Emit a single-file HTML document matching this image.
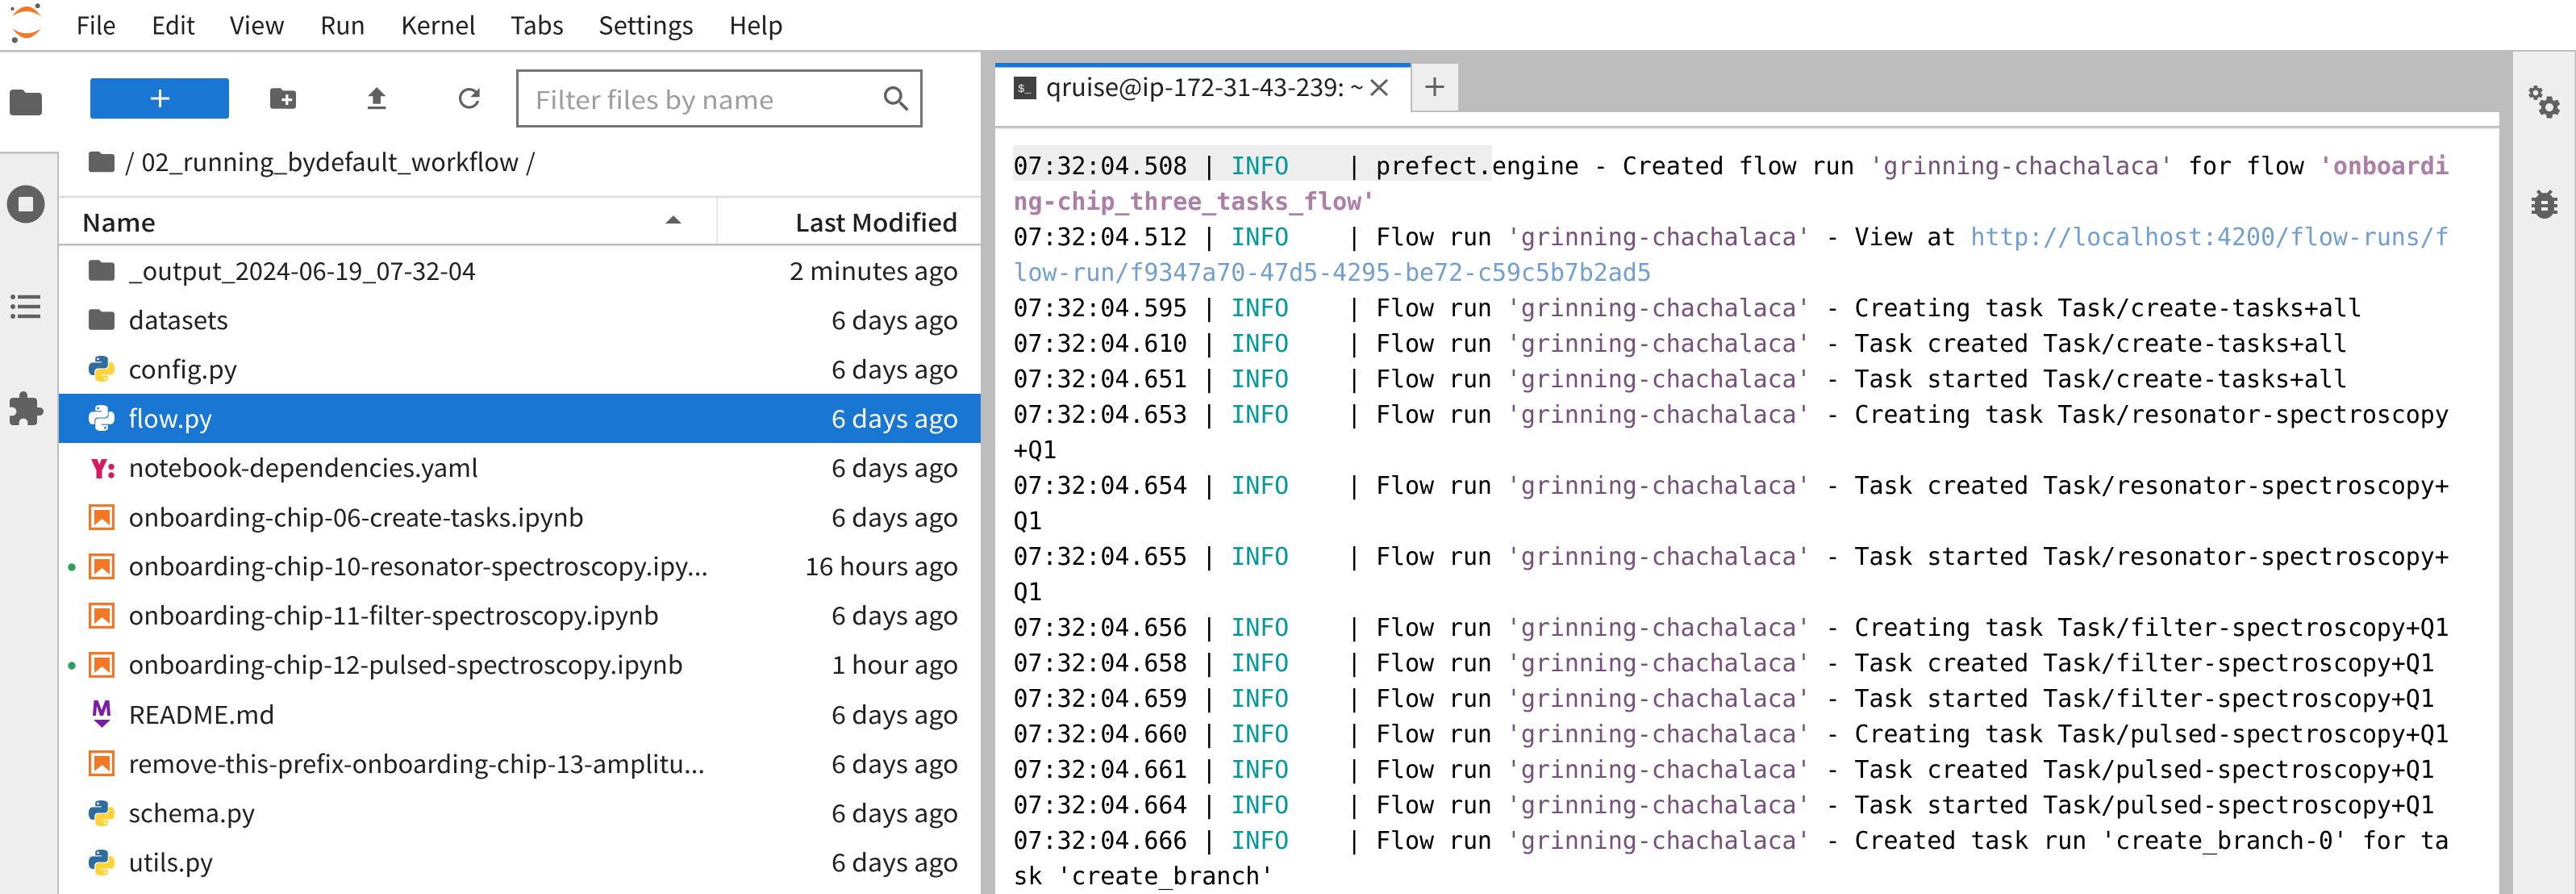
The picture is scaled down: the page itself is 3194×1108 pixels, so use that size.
<!DOCTYPE html>
<html lang="en">
<head>
<meta charset="utf-8">
<title>JupyterLab</title>
<style>
html,body{margin:0;padding:0;background:#fff;width:3194px;height:1108px;overflow:hidden}
svg{display:block}
.ui{font-family:"Noto Sans CJK JP","Liberation Sans",sans-serif;font-size:30px;fill:#212121}
.term{font-family:"DejaVu Sans Mono","Liberation Mono",monospace;font-size:30px;letter-spacing:-0.08px;fill:#000;white-space:pre}
.c{fill:#06989a}.m{fill:#75507b}.bm{fill:#ad7fa8;font-weight:bold}.l{fill:#729fcf}
.ic{fill:#616161}
</style>
</head>
<body>
<svg xmlns="http://www.w3.org/2000/svg" width="3194" height="1108" viewBox="0 0 3194 1108">
<defs>
<path id="folder" d="M10 4H4c-1.1 0-1.99.9-1.99 2L2 18c0 1.1.9 2 2 2h16c1.1 0 2-.9 2-2V8c0-1.1-.9-2-2-2h-8l-2-2z"/>
<path id="gear" d="M19.14 12.94c.04-.3.06-.61.06-.94 0-.32-.02-.64-.07-.94l2.03-1.58c.18-.14.23-.41.12-.61l-1.92-3.32c-.12-.22-.37-.29-.59-.22l-2.39.96c-.5-.38-1.03-.7-1.62-.94l-.36-2.54c-.04-.24-.24-.41-.48-.41h-3.84c-.24 0-.43.17-.47.41l-.36 2.54c-.59.24-1.13.57-1.62.94l-2.39-.96c-.22-.08-.47 0-.59.22L2.74 8.87c-.12.21-.08.47.12.61l2.03 1.58c-.05.3-.09.63-.09.94s.02.64.07.94l-2.03 1.58c-.18.14-.23.41-.12.61l1.92 3.32c.12.22.37.29.59.22l2.39-.96c.5.38 1.03.7 1.62.94l.36 2.54c.05.24.24.41.48.41h3.84c.24 0 .44-.17.47-.41l.36-2.54c.59-.24 1.13-.56 1.62-.94l2.39.96c.22.08.47 0 .59-.22l1.92-3.32c.12-.22.07-.47-.12-.61l-2.01-1.58zM12 15.6c-1.98 0-3.6-1.62-3.6-3.6s1.62-3.6 3.6-3.6 3.6 1.62 3.6 3.6-1.62 3.6-3.6 3.6z"/>
<path id="pyA" fill-rule="evenodd" d="M14.25.18l.9.2.73.26.59.3.45.32.34.34.25.34.16.33.1.3.04.26.02.2-.01.13V8.5l-.05.63-.13.55-.21.46-.26.38-.3.31-.33.25-.35.19-.35.14-.33.1-.3.07-.26.04-.21.02H8.77l-.69.05-.59.14-.5.22-.41.27-.33.32-.27.35-.2.36-.15.37-.1.35-.07.32-.04.27-.02.21v3.06H3.17l-.21-.03-.28-.07-.32-.12-.35-.18-.36-.26-.36-.36-.35-.46-.32-.59-.28-.73-.21-.88-.14-1.05-.05-1.23.06-1.22.16-1.04.24-.87.32-.71.36-.57.4-.44.42-.33.42-.24.4-.16.36-.1.32-.05.24-.01h.16l.06.01h8.16v-.83H6.18l-.01-2.75-.02-.37.05-.34.11-.31.17-.28.25-.26.31-.23.38-.2.44-.18.51-.15.58-.12.64-.1.71-.06.77-.04.84-.02 1.27.05zm-6.3 1.98l-.23.33-.08.41.08.41.23.34.33.22.41.09.41-.09.33-.22.23-.34.08-.41-.08-.41-.23-.33-.33-.22-.41-.09-.41.09z"/>
<path id="pyB" fill-rule="evenodd" d="M21.04 6.11l.28.06.32.12.35.18.36.27.36.35.35.47.32.59.28.73.21.88.14 1.04.05 1.23-.06 1.23-.16 1.04-.24.86-.32.71-.36.57-.4.45-.42.33-.42.24-.4.16-.36.09-.32.05-.24.02-.16-.01h-8.22v.82h5.84l.01 2.76.02.36-.05.34-.11.31-.17.29-.25.25-.31.24-.38.2-.44.17-.51.15-.58.13-.64.09-.71.07-.77.04-.84.01-1.27-.04-1.07-.14-.9-.2-.73-.25-.59-.3-.45-.33-.34-.34-.25-.34-.16-.33-.1-.3-.04-.25-.02-.2.01-.13v-5.34l.05-.64.13-.54.21-.46.26-.38.3-.32.33-.24.35-.2.35-.14.33-.1.3-.06.26-.04.21-.02.13-.01h5.84l.69-.05.59-.14.5-.21.41-.28.33-.32.27-.35.2-.36.15-.36.1-.35.07-.32.04-.28.02-.21V6.07h2.09l.14.01zm-6.47 14.25l-.23.33-.08.41.08.41.23.33.33.23.41.08.41-.08.33-.23.23-.33.08-.41-.08-.41-.23-.33-.33-.23-.41-.08-.41.08z"/>
<g id="py" transform="scale(1.333)"><use href="#pyA" fill="#306d9f"/><use href="#pyB" fill="#ffd43b"/></g>
<g id="nb">
<rect x="1.6" y="1.6" width="28.8" height="28.8" fill="#fff" stroke="#f37726" stroke-width="3.2"/>
<path d="M7 7H26V26L16.5 18 7 26Z" fill="#f37726"/>
</g>
</defs>

<!-- backgrounds -->
<rect width="3194" height="1108" fill="#fff"/>
<rect x="0" y="62" width="3194" height="2.5" fill="#bdbdbd"/>
<rect x="0" y="189" width="71" height="919" fill="#eee"/>
<rect x="0" y="188" width="72" height="2.5" fill="#bdbdbd"/>
<rect x="71" y="188" width="2" height="920" fill="#bdbdbd"/>
<rect x="1216" y="62" width="1900" height="1046" fill="#bdbdbd"/>
<rect x="3116" y="64" width="78" height="1044" fill="#eee"/>
<rect x="3192.5" y="64" width="1.5" height="1044" fill="#bdbdbd"/>

<!-- top menu -->
<path d="M15 20.5C21 12 27 8 33 8S45 12 51 20.5C44 15.5 38 14 33 14S22 15.5 15 20.5Z" fill="#f37726"/>
<path d="M15 35C22 40 28 41.3 33 41.3S44 40 51 35C45 43 39 47.3 33 47.3S21 43 15 35Z" fill="#f37726"/>
<circle cx="15.4" cy="11" r="2.2" fill="#616262"/>
<circle cx="46.7" cy="7.2" r="3" fill="#616262"/>
<circle cx="18.3" cy="49.7" r="3.6" fill="#616262"/>
<g class="ui">
<text x="94.5" y="42.5" textLength="49" lengthAdjust="spacingAndGlyphs">File</text>
<text x="188" y="42.5" textLength="54" lengthAdjust="spacingAndGlyphs">Edit</text>
<text x="285" y="42.5" textLength="68" lengthAdjust="spacingAndGlyphs">View</text>
<text x="397" y="42.5" textLength="56" lengthAdjust="spacingAndGlyphs">Run</text>
<text x="497" y="42.5" textLength="93" lengthAdjust="spacingAndGlyphs">Kernel</text>
<text x="633" y="42.5" textLength="66" lengthAdjust="spacingAndGlyphs">Tabs</text>
<text x="742" y="42.5" textLength="118" lengthAdjust="spacingAndGlyphs">Settings</text>
<text x="904" y="42.5" textLength="67" lengthAdjust="spacingAndGlyphs">Help</text>
</g>

<!-- left sidebar icons -->
<use href="#folder" class="ic" transform="translate(8 103) scale(2)"/>
<circle cx="32" cy="253" r="23.5" fill="#616161"/>
<rect x="23" y="244" width="18" height="18" rx="1.5" fill="#eee"/>
<g fill="#616161">
<circle cx="16" cy="368" r="3"/><circle cx="16" cy="380" r="3"/><circle cx="16" cy="392" r="3"/>
<rect x="22" y="365.8" width="28" height="4.4"/><rect x="22" y="377.8" width="28" height="4.4"/><rect x="22" y="389.8" width="28" height="4.4"/>
</g>
<path class="ic" transform="translate(8 483) scale(2)" d="M20.5 11H19V7c0-1.1-.9-2-2-2h-4V3.5C13 2.12 11.88 1 10.5 1S8 2.12 8 3.5V5H4c-1.1 0-1.99.9-1.99 2v3.8H3.5c1.49 0 2.7 1.21 2.7 2.7s-1.21 2.7-2.7 2.7H2V20c0 1.1.9 2 2 2h3.8v-1.5c0-1.49 1.21-2.7 2.7-2.7 1.49 0 2.7 1.21 2.7 2.7V22H17c1.1 0 2-.9 2-2v-4h1.5c1.38 0 2.5-1.12 2.5-2.5S21.88 11 20.5 11z"/>

<!-- toolbar -->
<rect x="112" y="97" width="172" height="50" rx="3" fill="#1976d2"/>
<path d="M198.5 111V133M187 122H210" stroke="#fff" stroke-width="3" fill="none"/>
<path class="ic" transform="translate(331.8 102.8) scale(1.6)" d="M20 6h-8l-2-2H4c-1.11 0-1.99.89-1.99 2L2 18c0 1.11.89 2 2 2h16c1.11 0 2-.89 2-2V8c0-1.11-.89-2-2-2zm-1 8h-3v3h-2v-3h-3v-2h3V9h2v3h3v2z"/>
<path class="ic" transform="translate(448 103.2) scale(1.6)" d="M9 16h6v-6h4l-7-7-7 7h4v6zm-4 2h14v2H5v-2z"/>
<path class="ic" transform="translate(562.6 102.6) scale(1.6)" d="M17.65 6.35C16.2 4.9 14.21 4 12 4c-4.42 0-7.99 3.58-7.99 8s3.57 8 7.99 8c3.73 0 6.84-2.55 7.73-6h-2.08c-.82 2.33-3.04 4-5.65 4-3.31 0-6-2.69-6-6s2.69-6 6-6c1.66 0 3.14.69 4.22 1.78L13 11h7V4l-2.35 2.35z"/>
<rect x="641.5" y="87.5" width="501" height="69" fill="#fff" stroke="#757575" stroke-width="3"/>
<text class="ui" style="fill:#9e9e9e" x="663.5" y="135" textLength="296" lengthAdjust="spacingAndGlyphs">Filter files by name</text>
<path class="ic" transform="translate(1090.7 101.75) scale(1.75)" d="M15.5 14h-.79l-.28-.27C15.41 12.59 16 11.11 16 9.5 16 5.91 13.09 3 9.5 3S3 5.91 3 9.5 5.91 16 9.5 16c1.61 0 3.09-.59 4.23-1.57l.27.28v.79l5 4.99L20.49 19l-4.99-5zm-6 0C7.01 14 5 11.99 5 9.5S7.01 5 9.5 5 14 7.01 14 9.5 11.99 14 9.5 14z"/>

<!-- breadcrumbs -->
<use href="#folder" class="ic" transform="translate(106.8 181.3) scale(1.6)"/>
<text class="ui" x="155" y="212">/</text>
<text class="ui" x="175.5" y="212" textLength="468" lengthAdjust="spacingAndGlyphs">02_running_bydefault_workflow</text>
<text class="ui" x="652" y="212">/</text>

<!-- listing header -->
<rect x="73" y="242.5" width="1143" height="3" fill="#e0e0e0"/>
<rect x="888.5" y="245" width="1.5" height="58" fill="#e0e0e0"/>
<rect x="73" y="302" width="1143" height="2.5" fill="#bdbdbd"/>
<text class="ui" x="101.5" y="287" textLength="91.5" lengthAdjust="spacingAndGlyphs" style="font-weight:500">Name</text>
<path d="M825 277H845L835 267Z" fill="#616161"/>
<text class="ui" x="986" y="287" textLength="202" lengthAdjust="spacingAndGlyphs" style="font-weight:500">Last Modified</text>

<!-- rows -->
<rect x="73" y="488" width="1143" height="61" fill="#1976d2"/>
<use href="#folder" class="ic" transform="translate(106.8 315.8) scale(1.6)"/>
<use href="#folder" class="ic" transform="translate(106.8 376.8) scale(1.6)"/>
<use href="#py" transform="translate(110 441)"/>
<g transform="translate(110 502) scale(1.333)" fill="#fff"><use href="#pyA"/><use href="#pyB"/></g>
<path d="M113 569H120.5L123.2 576 125.8 569H133L126.5 583V593H119.5V583Z" fill="#d81b60"/>
<circle cx="138" cy="578.5" r="3.7" fill="#d81b60"/><circle cx="138" cy="589" r="3.7" fill="#d81b60"/>
<use href="#nb" transform="translate(110 625)"/>
<use href="#nb" transform="translate(110 686)"/>
<use href="#nb" transform="translate(110 747)"/>
<use href="#nb" transform="translate(110 808)"/>
<path d="M115 887L116.5 868H121.5L126 880 130.5 868H135.5L137 887H133L132 875 128 887H124L120 875 119 887Z" fill="#7b1fa2"/>
<path d="M116 892H137L126.5 902Z" fill="#7b1fa2"/>
<use href="#nb" transform="translate(110 930)"/>
<use href="#py" transform="translate(110 992)"/>
<use href="#py" transform="translate(110 1053)"/>
<circle cx="89" cy="703" r="4.7" fill="#2e9e5b"/>
<circle cx="89" cy="825" r="4.7" fill="#2e9e5b"/>

<g class="ui">
<text x="159.5" y="347" textLength="430.5" lengthAdjust="spacingAndGlyphs">_output_2024-06-19_07-32-04</text>
<text x="159.5" y="408" textLength="123.5" lengthAdjust="spacingAndGlyphs">datasets</text>
<text x="159.5" y="469" textLength="134.5" lengthAdjust="spacingAndGlyphs">config.py</text>
<text x="159.5" y="530" textLength="103.5" lengthAdjust="spacingAndGlyphs" style="fill:#fff">flow.py</text>
<text x="159.5" y="591" textLength="433.5" lengthAdjust="spacingAndGlyphs">notebook-dependencies.yaml</text>
<text x="159.5" y="652.5" textLength="564.5" lengthAdjust="spacingAndGlyphs">onboarding-chip-06-create-tasks.ipynb</text>
<text x="159.5" y="713" textLength="718.5" lengthAdjust="spacingAndGlyphs">onboarding-chip-10-resonator-spectroscopy.ipy...</text>
<text x="159.5" y="774" textLength="657.5" lengthAdjust="spacingAndGlyphs">onboarding-chip-11-filter-spectroscopy.ipynb</text>
<text x="159.5" y="835" textLength="687.5" lengthAdjust="spacingAndGlyphs">onboarding-chip-12-pulsed-spectroscopy.ipynb</text>
<text x="159.5" y="897" textLength="181.5" lengthAdjust="spacingAndGlyphs">README.md</text>
<text x="159.5" y="958" textLength="714.5" lengthAdjust="spacingAndGlyphs">remove-this-prefix-onboarding-chip-13-amplitu...</text>
<text x="159.5" y="1019" textLength="156.5" lengthAdjust="spacingAndGlyphs">schema.py</text>
<text x="159.5" y="1080" textLength="104.5" lengthAdjust="spacingAndGlyphs">utils.py</text>

<text x="979" y="347" textLength="209.5" lengthAdjust="spacingAndGlyphs">2 minutes ago</text>
<text x="1031" y="408" textLength="157.5" lengthAdjust="spacingAndGlyphs">6 days ago</text>
<text x="1031" y="469" textLength="157.5" lengthAdjust="spacingAndGlyphs">6 days ago</text>
<text x="1031" y="530" textLength="157.5" lengthAdjust="spacingAndGlyphs" style="fill:#fff">6 days ago</text>
<text x="1031" y="591" textLength="157.5" lengthAdjust="spacingAndGlyphs">6 days ago</text>
<text x="1031" y="652.5" textLength="157.5" lengthAdjust="spacingAndGlyphs">6 days ago</text>
<text x="998" y="713" textLength="190.5" lengthAdjust="spacingAndGlyphs">16 hours ago</text>
<text x="1031" y="774" textLength="157.5" lengthAdjust="spacingAndGlyphs">6 days ago</text>
<text x="1031" y="835" textLength="157.5" lengthAdjust="spacingAndGlyphs">1 hour ago</text>
<text x="1031" y="897" textLength="157.5" lengthAdjust="spacingAndGlyphs">6 days ago</text>
<text x="1031" y="958" textLength="157.5" lengthAdjust="spacingAndGlyphs">6 days ago</text>
<text x="1031" y="1019" textLength="157.5" lengthAdjust="spacingAndGlyphs">6 days ago</text>
<text x="1031" y="1080" textLength="157.5" lengthAdjust="spacingAndGlyphs">6 days ago</text>
</g>

<!-- tab bar -->
<rect x="1234" y="139" width="1865" height="969" fill="#fff"/>
<rect x="1234" y="78" width="515" height="61" fill="#fff"/>
<rect x="1234" y="78" width="515" height="5.5" fill="#1976d2"/>
<rect x="1751" y="79" width="57" height="58" fill="#eee"/>
<path d="M1779 96V119M1767.5 107.5H1790.5" stroke="#616161" stroke-width="3" fill="none"/>
<rect x="1257" y="95" width="28" height="28" fill="#424242"/>
<text x="1262" y="114" style="font-family:'Liberation Mono',monospace;font-size:14px;fill:#eee">$_</text>
<text class="ui" x="1297" y="119" textLength="394" lengthAdjust="spacingAndGlyphs">qruise@ip-172-31-43-239: ~</text>
<path d="M1700 99L1720 118M1720 99L1700 118" stroke="#616161" stroke-width="3" fill="none"/>
<rect x="1234" y="156" width="1865" height="2.5" fill="#bdbdbd"/>
<rect x="1234" y="158.5" width="1865" height="1.5" fill="#e8e8e8"/>

<!-- terminal -->
<rect x="1256" y="180" width="594" height="44" fill="#eee"/>
<g class="term" xml:space="preserve">
<text x="1256.5" y="216" xml:space="preserve">07:32:04.508 | <tspan class="c">INFO</tspan>    | prefect.engine - Created flow run <tspan class="m">'grinning-chachalaca'</tspan> for flow <tspan class="bm">'onboardi</tspan></text>
<text x="1256.5" y="260" xml:space="preserve"><tspan class="bm">ng-chip_three_tasks_flow'</tspan></text>
<text x="1256.5" y="304" xml:space="preserve">07:32:04.512 | <tspan class="c">INFO</tspan>    | Flow run <tspan class="m">'grinning-chachalaca'</tspan> - View at <tspan class="l">http://localhost:4200/flow-runs/f</tspan></text>
<text x="1256.5" y="348" xml:space="preserve"><tspan class="l">low-run/f9347a70-47d5-4295-be72-c59c5b7b2ad5</tspan></text>
<text x="1256.5" y="392" xml:space="preserve">07:32:04.595 | <tspan class="c">INFO</tspan>    | Flow run <tspan class="m">'grinning-chachalaca'</tspan> - Creating task Task/create-tasks+all</text>
<text x="1256.5" y="436" xml:space="preserve">07:32:04.610 | <tspan class="c">INFO</tspan>    | Flow run <tspan class="m">'grinning-chachalaca'</tspan> - Task created Task/create-tasks+all</text>
<text x="1256.5" y="480" xml:space="preserve">07:32:04.651 | <tspan class="c">INFO</tspan>    | Flow run <tspan class="m">'grinning-chachalaca'</tspan> - Task started Task/create-tasks+all</text>
<text x="1256.5" y="524" xml:space="preserve">07:32:04.653 | <tspan class="c">INFO</tspan>    | Flow run <tspan class="m">'grinning-chachalaca'</tspan> - Creating task Task/resonator-spectroscopy</text>
<text x="1256.5" y="568" xml:space="preserve">+Q1</text>
<text x="1256.5" y="612" xml:space="preserve">07:32:04.654 | <tspan class="c">INFO</tspan>    | Flow run <tspan class="m">'grinning-chachalaca'</tspan> - Task created Task/resonator-spectroscopy+</text>
<text x="1256.5" y="656" xml:space="preserve">Q1</text>
<text x="1256.5" y="700" xml:space="preserve">07:32:04.655 | <tspan class="c">INFO</tspan>    | Flow run <tspan class="m">'grinning-chachalaca'</tspan> - Task started Task/resonator-spectroscopy+</text>
<text x="1256.5" y="744" xml:space="preserve">Q1</text>
<text x="1256.5" y="788" xml:space="preserve">07:32:04.656 | <tspan class="c">INFO</tspan>    | Flow run <tspan class="m">'grinning-chachalaca'</tspan> - Creating task Task/filter-spectroscopy+Q1</text>
<text x="1256.5" y="832" xml:space="preserve">07:32:04.658 | <tspan class="c">INFO</tspan>    | Flow run <tspan class="m">'grinning-chachalaca'</tspan> - Task created Task/filter-spectroscopy+Q1</text>
<text x="1256.5" y="876" xml:space="preserve">07:32:04.659 | <tspan class="c">INFO</tspan>    | Flow run <tspan class="m">'grinning-chachalaca'</tspan> - Task started Task/filter-spectroscopy+Q1</text>
<text x="1256.5" y="920" xml:space="preserve">07:32:04.660 | <tspan class="c">INFO</tspan>    | Flow run <tspan class="m">'grinning-chachalaca'</tspan> - Creating task Task/pulsed-spectroscopy+Q1</text>
<text x="1256.5" y="964" xml:space="preserve">07:32:04.661 | <tspan class="c">INFO</tspan>    | Flow run <tspan class="m">'grinning-chachalaca'</tspan> - Task created Task/pulsed-spectroscopy+Q1</text>
<text x="1256.5" y="1008" xml:space="preserve">07:32:04.664 | <tspan class="c">INFO</tspan>    | Flow run <tspan class="m">'grinning-chachalaca'</tspan> - Task started Task/pulsed-spectroscopy+Q1</text>
<text x="1256.5" y="1052" xml:space="preserve">07:32:04.666 | <tspan class="c">INFO</tspan>    | Flow run <tspan class="m">'grinning-chachalaca'</tspan> - Created task run 'create_branch-0' for ta</text>
<text x="1256.5" y="1096" xml:space="preserve">sk 'create_branch'</text>
</g>

<!-- right sidebar icons -->
<use href="#gear" class="ic" transform="translate(3144.2 116.2) scale(1.4)"/>
<use href="#gear" class="ic" transform="translate(3132.8 103.8) scale(.93)"/>
<path class="ic" transform="translate(3131 229) scale(2)" d="M20 8h-2.81c-.45-.78-1.07-1.45-1.82-1.96L17 4.41 15.59 3l-2.17 2.17C12.96 5.06 12.49 5 12 5c-.49 0-.96.06-1.41.17L8.41 3 7 4.41l1.62 1.63C7.88 6.55 7.26 7.22 6.81 8H4v2h2.09c-.05.33-.09.66-.09 1v1H4v2h2v1c0 .34.04.67.09 1H4v2h2.81c1.04 1.79 2.97 3 5.19 3s4.15-1.21 5.19-3H20v-2h-2.09c.05-.33.09-.66.09-1v-1h2v-2h-2v-1c0-.34-.04-.67-.09-1H20V8zm-6 8h-4v-2h4v2zm0-4h-4v-2h4v2z"/>
</svg>
</body>
</html>
